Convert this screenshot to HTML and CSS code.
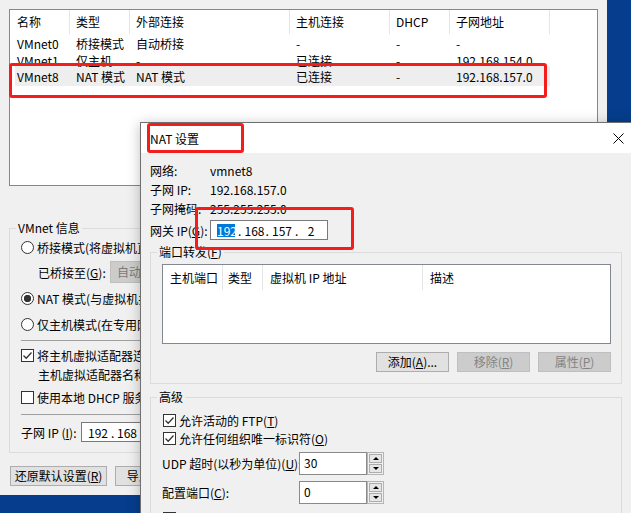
FILE: index.html
```html
<!DOCTYPE html>
<html lang="zh-CN">
<head>
    <meta charset="UTF-8">
    <meta name="viewport" content="width=device-width, initial-scale=1.0">
    <title>虚拟网络编辑器 | NAT 设置</title>
    <link rel="stylesheet" href="styles.css">
</head>
<body>
    <div class="desktop">
        <div class="main-window">
            <div class="net-list">
                <div class="list-head">
                    <span>名称</span><span>类型</span><span>外部连接</span><span>主机连接</span><span>DHCP</span><span>子网地址</span>
                </div>
                <div class="list-row first">
                    <span>VMnet0</span><span>桥接模式</span><span>自动桥接</span><span>-</span><span>-</span><span>-</span>
                </div>
                <div class="list-row">
                    <span>VMnet1</span><span>仅主机...</span><span>-</span><span>已连接</span><span>-</span><span>192.168.154.0</span>
                </div>
                <div class="list-row selected">
                    <span>VMnet8</span><span>NAT 模式</span><span>NAT 模式</span><span>已连接</span><span>-</span><span>192.168.157.0</span>
                </div>
            </div>

            <fieldset class="group vmnet-info">
                <legend>VMnet 信息</legend>
                <div class="group-body">
                    <div class="opt"><span class="radio"></span><span>桥接模式(将虚拟机直接连接到外部网络)(<u>B</u>)</span></div>
                    <div class="bridge-row">
                        <span>已桥接至(<u>G</u>):</span>
                        <span class="combo">自动</span>
                    </div>
                    <div class="opt nat-opt"><span class="radio on"></span><span>NAT 模式(与虚拟机共享主机的 IP 地址)(<u>N</u>)</span></div>
                    <div class="opt host-opt"><span class="radio"></span><span>仅主机模式(在专用网络内连接虚拟机)(<u>H</u>)</span></div>
                    <div class="sep"></div>
                    <div class="opt check-opt">
                        <span class="check on"><svg viewBox="0 0 11 11" width="11" height="11"><path d="M1.5 5.5 L4.2 8.2 L9.5 2.5" fill="none" stroke="#333" stroke-width="1.3"/></svg></span>
                        <span>将主机虚拟适配器连接到此网络(<u>V</u>)</span>
                    </div>
                    <div class="adapter">主机虚拟适配器名称: VMware 网络适配器 VMnet8</div>
                    <div class="opt dhcp-opt"><span class="check"></span><span>使用本地 DHCP 服务将 IP 地址分配给虚拟机(<u>D</u>)</span></div>
                    <div class="sep sep-low"></div>
                    <div class="subnet-row">
                        <span>子网 IP (<u>I</u>):</span>
                        <span class="ip-box">
                            <span class="oct">192</span><span class="dot">.</span><span class="oct">168</span><span class="dot">.</span><span class="oct">157</span><span class="dot">.</span><span class="oct">0</span>
                        </span>
                    </div>
                </div>
            </fieldset>

            <div class="main-buttons">
                <button type="button" class="btn wide">还原默认设置(<u>R</u>)</button>
                <button type="button" class="btn">导入(<u>T</u>)...</button>
            </div>
        </div>

        <div class="nat-dialog">
            <div class="dlg-title">
                <span>NAT 设置</span>
                <span class="close">
                    <svg viewBox="0 0 11 11" width="11" height="11"><path d="M0.5 0.5 L10.5 10.5 M10.5 0.5 L0.5 10.5" stroke="#000" stroke-width="1"/></svg>
                </span>
            </div>
            <div class="dlg-body">
                <div class="info">
                    <span>网络:</span><span>vmnet8</span>
                    <span>子网 IP:</span><span>192.168.157.0</span>
                    <span>子网掩码:</span><span>255.255.255.0</span>
                </div>
                <div class="gateway-row">
                    <span>网关 IP(<u>G</u>):</span>
                    <span class="ip-box">
                        <span class="oct sel">192</span><span class="dot">.</span><span class="oct">168</span><span class="dot">.</span><span class="oct">157</span><span class="dot last">.</span><span class="oct end">2</span>
                    </span>
                </div>

                <fieldset class="group port-group">
                    <legend>端口转发(<u>F</u>)</legend>
                    <div class="group-body">
                        <div class="port-list">
                            <div class="port-head">
                                <span>主机端口</span><span>类型</span><span>虚拟机 IP 地址</span><span>描述</span>
                            </div>
                        </div>
                        <div class="port-buttons">
                            <button type="button" class="btn">添加(<u>A</u>)...</button>
                            <button type="button" class="btn disabled">移除(<u>R</u>)</button>
                            <button type="button" class="btn disabled">属性(<u>P</u>)</button>
                        </div>
                    </div>
                </fieldset>

                <fieldset class="group adv-group">
                    <legend>高级</legend>
                    <div class="group-body">
                        <div class="opt row18">
                            <span class="check on"><svg viewBox="0 0 11 11" width="11" height="11"><path d="M1.5 5.5 L4.2 8.2 L9.5 2.5" fill="none" stroke="#333" stroke-width="1.3"/></svg></span>
                            <span>允许活动的 FTP(<u>T</u>)</span>
                        </div>
                        <div class="opt row18">
                            <span class="check on"><svg viewBox="0 0 11 11" width="11" height="11"><path d="M1.5 5.5 L4.2 8.2 L9.5 2.5" fill="none" stroke="#333" stroke-width="1.3"/></svg></span>
                            <span>允许任何组织唯一标识符(<u>O</u>)</span>
                        </div>
                        <div class="num-row">
                            <span>UDP 超时(以秒为单位)(<u>U</u>):</span>
                            <span class="num">30</span>
                            <span class="spin"><span class="spin-btn"><i class="up"></i></span><span class="spin-btn"><i class="down"></i></span></span>
                        </div>
                        <div class="num-row">
                            <span>配置端口(<u>C</u>):</span>
                            <span class="num">0</span>
                            <span class="spin"><span class="spin-btn"><i class="up"></i></span><span class="spin-btn"><i class="down"></i></span></span>
                        </div>
                        <div class="opt row18 last-opt"><span class="check"></span></div>
                    </div>
                </fieldset>
            </div>
        </div>

        <!-- red annotation boxes -->
        <div class="mark mark-row"></div>
        <div class="mark mark-title"></div>
        <div class="mark mark-gw"></div>
    </div>
</body>
</html>
```

FILE: styles.css
```css
* {
    box-sizing: border-box;
}

body {
    margin: 0;
    font-family: "Noto Sans CJK SC", sans-serif;
    font-size: 12px;
    color: #000;
}

u {
    text-decoration: underline;
    text-underline-offset: 1px;
}

.desktop {
    position: relative;
    width: 631px;
    height: 513px;
    overflow: hidden;
    background: #063d8c;
}

/* ---------- main window ---------- */

.main-window {
    width: 607px;
    height: 495px;
    padding: 9px 0 0 9px;
    background: #f0f0f0;
    overflow: hidden;
}

.net-list {
    width: 589px;
    height: 177px;
    border: 1px solid #828790;
    background: #fff;
}

.list-head {
    display: grid;
    grid-template-columns: 60px 60px 160px 100px 60px 100px;
    height: 24px;
    line-height: 24px;
}

.list-head span {
    padding-left: 6px;
    border-right: 1px solid #e5e5e5;
}

.list-head span:first-child {
    padding-left: 7px;
}

.list-row {
    display: grid;
    grid-template-columns: 55px 60px 160px 100px 60px 100px;
    width: 535px;
    height: 17px;
    margin-left: 5px;
    line-height: 17px;
    white-space: nowrap;
}

.list-row span {
    padding-left: 6px;
}

.list-row span:first-child {
    padding-left: 2px;
}

.list-row.first {
    margin-top: 1px;
}

.list-row.selected {
    height: 20px;
    margin-top: -3px;
    padding-top: 2px;
    background: #eeeeee;
}

.group {
    margin: 0;
    padding: 0;
    border: 1px solid #dcdcdc;
    min-width: 0;
}

.group legend {
    margin-left: 6px;
    padding: 0 2px;
    line-height: 14px;
}

.vmnet-info {
    width: 320px;
    margin-top: 35px;
}

.vmnet-info .group-body {
    padding: 4px 0 10px 11px;
}

.opt {
    display: flex;
    align-items: center;
    gap: 3px;
    height: 17px;
    white-space: nowrap;
}

.radio {
    flex: none;
    width: 13px;
    height: 13px;
    border: 1px solid #333;
    border-radius: 50%;
    background: #fff;
}

.radio.on {
    background: radial-gradient(circle, #333 0, #333 3.4px, #fff 4px);
}

.check {
    flex: none;
    display: flex;
    align-items: center;
    justify-content: center;
    width: 13px;
    height: 13px;
    border: 1px solid #333;
    background: #fff;
}

.bridge-row {
    display: grid;
    grid-template-columns: 72px 160px;
    align-items: center;
    height: 22px;
    margin-top: 5px;
    padding-left: 17px;
    white-space: nowrap;
}

.combo {
    height: 22px;
    padding-left: 6px;
    line-height: 20px;
    color: #7a7a7a;
    background: #cccccc;
    border: 1px solid #bfbfbf;
}

.nat-opt {
    margin-top: 7px;
}

.host-opt {
    margin-top: 9px;
}

.sep {
    height: 1px;
    margin-top: 7px;
    background: #a0a0a0;
}

.sep-low {
    margin-top: 8px;
}

.check-opt {
    margin-top: 6px;
}

.adapter {
    height: 17px;
    margin-top: 2px;
    padding-left: 17px;
    line-height: 17px;
    white-space: nowrap;
}

.dhcp-opt {
    margin-top: 6px;
}

.subnet-row {
    display: grid;
    grid-template-columns: 60px 160px;
    align-items: center;
    height: 20px;
    margin-top: 7px;
    white-space: nowrap;
}

.gateway-row {
    display: grid;
    grid-template-columns: 60px 118px;
    align-items: center;
    height: 20px;
    margin-top: 2px;
    white-space: nowrap;
}

.ip-box {
    display: flex;
    align-items: center;
    height: 20px;
    padding-left: 6px;
    border: 1px solid #7a7a7a;
    background: #fff;
}

.oct {
    flex: none;
    width: 18px;
    line-height: 13px;
}

.oct.end {
    text-align: center;
}

.dot {
    flex: none;
    width: 9.5px;
    padding-left: 3px;
}

.dot.last {
    width: 12px;
    padding-left: 5px;
}

.subnet-row .dot {
    width: 11px;
    padding-left: 5px;
}

.oct.sel {
    background: #0078d7;
    color: #fff;
}

.main-buttons {
    display: flex;
    gap: 8px;
    margin-top: 13px;
    padding-left: 1px;
}

.btn {
    flex: none;
    height: 20px;
    width: 73px;
    padding: 0;
    font: inherit;
    line-height: 18px;
    white-space: nowrap;
    color: #000;
    background: #e1e1e1;
    border: 1px solid #adadad;
    border-radius: 0;
}

.btn.wide {
    width: 97px;
}

.btn.disabled {
    color: #838383;
    background: #cccccc;
    border-color: #bfbfbf;
}

/* ---------- NAT dialog ---------- */

.nat-dialog {
    position: absolute;
    left: 140px;
    top: 122px;
    width: 500px;
    height: 420px;
    border: 1px solid #707070;
    background: #f0f0f0;
    box-shadow: 0 2px 12px rgba(0, 0, 0, 0.25);
}

.dlg-title {
    display: flex;
    align-items: center;
    justify-content: space-between;
    height: 30px;
    padding-left: 9px;
    background: #fff;
}

.close {
    display: flex;
    align-items: center;
    justify-content: center;
    width: 42px;
    height: 30px;
}

.dlg-body {
    padding: 8px 0 0 9px;
}

.info {
    display: grid;
    grid-template-columns: 60px auto;
    grid-auto-rows: 19px;
    line-height: 19px;
}

.port-group {
    width: 472px;
    margin-top: 5px;
}

.port-group .group-body {
    padding: 5px 10px 11px 11px;
}

.port-list {
    height: 80px;
    border: 1px solid #828790;
    background: #fff;
}

.port-head {
    display: grid;
    grid-template-columns: 60px 40px 160px 1fr;
    height: 25px;
    line-height: 25px;
}

.port-head span {
    padding-left: 7px;
}

.port-head span:nth-child(-n+3) {
    border-right: 1px solid #e5e5e5;
}

.port-head span:nth-child(2) {
    padding-left: 5px;
}

.port-buttons {
    display: flex;
    justify-content: flex-end;
    gap: 8px;
    margin-top: 8px;
}

.adv-group {
    width: 472px;
    margin-top: 6px;
}

.adv-group .group-body {
    padding: 7px 0 0 12px;
}

.row18 {
    height: 18px;
}

.num-row {
    display: flex;
    align-items: center;
    height: 23px;
    margin-top: 5px;
    white-space: nowrap;
}

.num-row + .num-row {
    margin-top: 6px;
}

.num-row > span:first-child {
    width: 137px;
    margin-left: -1px;
}

.num {
    width: 68px;
    height: 23px;
    padding: 1px 4px;
    line-height: 17px;
    border: 1px solid #8a8a8a;
    background: #fff;
}

.spin {
    display: flex;
    flex-direction: column;
    gap: 1px;
    width: 17px;
    height: 23px;
    padding: 1px;
    border: 1px solid #b5b5b5;
}

.spin-btn {
    display: flex;
    align-items: center;
    justify-content: center;
    height: 9px;
    border: 1px solid #adadad;
    background: #e6e6e6;
}

.spin-btn i {
    width: 0;
    height: 0;
    border-left: 3px solid transparent;
    border-right: 3px solid transparent;
}

.spin-btn .up {
    border-bottom: 3px solid #000;
}

.spin-btn .down {
    border-top: 3px solid #000;
}

.last-opt {
    margin-top: 5px;
}

/* ---------- annotations ---------- */

.mark {
    position: absolute;
    border: 3px solid #f51c1c;
    border-radius: 3px;
}

.mark-row {
    left: 9px;
    top: 63px;
    width: 538px;
    height: 35px;
}

.mark-title {
    left: 147px;
    top: 123px;
    width: 97px;
    height: 30px;
}

.mark-gw {
    left: 195px;
    top: 207px;
    width: 159px;
    height: 43px;
}
```
